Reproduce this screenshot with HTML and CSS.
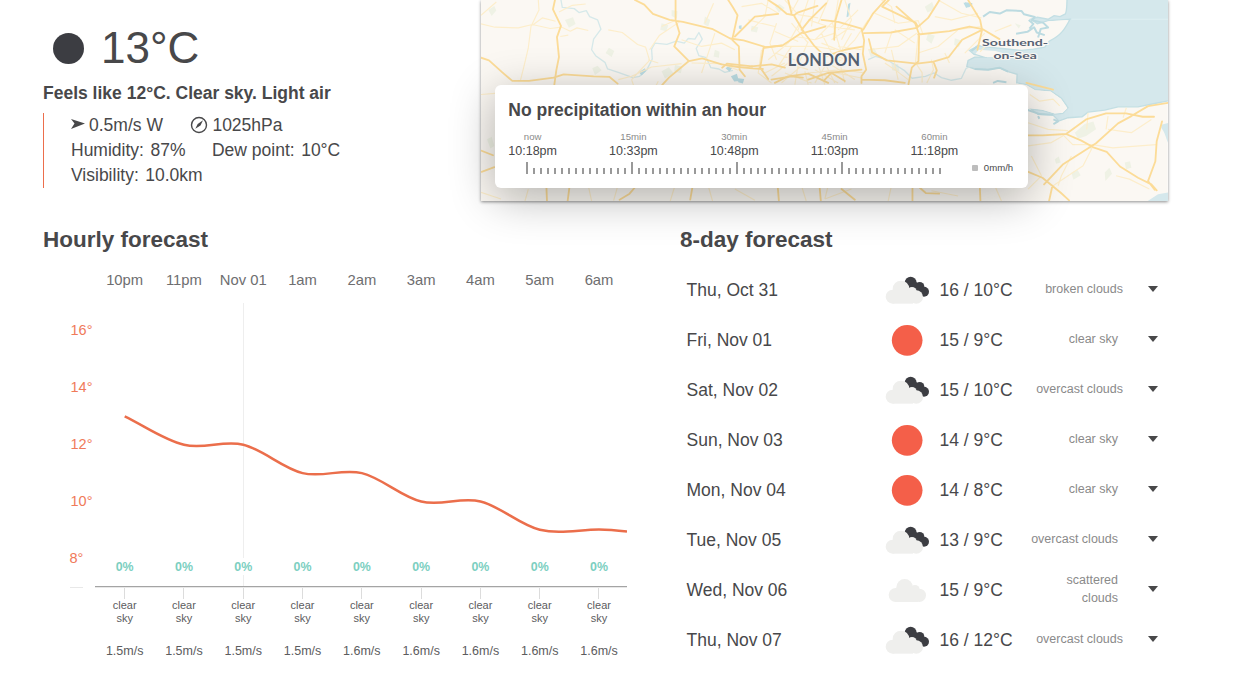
FILE: index.html
```
<!DOCTYPE html>
<html lang="en">
<head>
<meta charset="utf-8">
<title>Weather - London</title>
<link rel="stylesheet" href="styles.css">
</head>
<body>
<svg class="defs" width="0" height="0" aria-hidden="true">
  <symbol id="cloud" viewBox="0 0 135 90">
    <g fill="#efefed" transform="translate(9 -5)"><circle cx="23" cy="65" r="21"/><circle cx="50" cy="42" r="25"/><circle cx="81" cy="49" r="14"/><circle cx="94" cy="66" r="20"/><path d="M23 44H90V86H23z"/></g>
  </symbol>
  <symbol id="cloud-dark" viewBox="0 0 135 90">
    <g fill="#3c3d42"><circle cx="77" cy="23" r="18"/><circle cx="104" cy="35" r="14"/><circle cx="117" cy="50" r="15"/><path d="M62 34L92 20L124 44L112 64L84 50z"/></g>
    <g fill="#efefed"><circle cx="23" cy="65" r="21"/><circle cx="48" cy="42" r="25"/><circle cx="81" cy="50" r="14"/><circle cx="94" cy="66" r="20"/><path d="M23 46H84V86H23z"/></g>
  </symbol>
  <symbol id="sun" viewBox="0 0 135 90" overflow="visible"><circle cx="66.500" cy="46" r="46" fill="#f45f49"/></symbol>
</svg>
<main class="page">
  <section class="top">
    <div class="current">
      <div class="temp-line"><span class="moon"></span><span class="temp">13°C</span></div>
      <div class="feels">Feels like 12°C. Clear sky. Light air</div>
      <ul class="facts">
        <li><svg class="wind" viewBox="0 0 14 11"><path d="M0 0L14 4.500L0 10L3.500 4.600z" fill="#48484a"/></svg>0.5m/s W</li>
        <li><svg class="gauge" viewBox="0 0 18 18"><circle cx="9" cy="9" r="7.500" fill="none" stroke="#48484a" stroke-width="1.400"/><path d="M13 4.200L10.500 9.500L5.300 12.800L7.700 7.900z" fill="#48484a"/></svg>1025hPa</li>
        <li class="reading">Humidity:<span>87%</span></li>
        <li class="reading">Dew point:<span>10°C</span></li>
        <li class="reading visibility">Visibility:<span>10.0km</span></li>
      </ul>
    </div>
    <div class="map">
      <svg class="map-art" viewBox="18 0 2061 606" preserveAspectRatio="none">
        <rect x="18" width="2061" height="606" fill="#fbf8f3"/>
        <g fill="#eff2e5">
          <path d="M40 30l18-12 6 14-14 16zM270 60l24-8 8 20-20 12zM392 160l10-16 16 10-8 18zM560 70l20 6-6 18-18-4zM590 30l18 4-2 22-16-8zM352 206l16-8 12 14-20 14zM560 215l22-12 14 18-26 16zM600 195l22 6-4 20-20-6zM36 420l14-8 8 28-12 8zM690 50l16 10-6 20-14-8zM830 78l20 4-4 16-18-4zM720 150l14 6-2 18-16-4zM900 20l14-8 16 12-18 14z"/>
          <path d="M1350 20l22-14 8 22-22 10zM1360 100l20 8-10 24-16-12zM1250 190l20 4 4 22-22-4zM1440 115l22 8-10 20-14-8zM1180 150l18-6 10 20-20 8zM1800 400l30-26 26-8 8 24-30 20-24 8zM1840 440l18-6-8 20zM1890 520l14-14 8 18-20 22zM1950 490l16-4 4 20-16 4zM1790 520l18-8 10 16-22 14zM1740 480l12-8 6 18-14 4zM1620 70l18 6-6 10z"/>
        </g>
        <path fill="#d5e8ec" stroke="#c3dfe4" stroke-width="4" d="M1777-5C1776 14 1777 32 1772 42L1756 50L1738 47L1720 58L1688 52L1668 58L1688 72L1720 62L1786 58C1770 88 1760 106 1724 124L1710 142L1676 148L1640 152L1590 147L1540 142L1512 138L1484 152L1498 164L1536 172L1500 172L1480 182L1476 200L1500 208L1540 210L1574 204L1600 216L1627 224L1626 250L1655 255L1680 270L1728 274L1760 296L1780 325L1764 342L1740 344L1704 333L1670 330L1690 345L1735 347L1752 365L1780 355L1822 352L1840 338L1890 332L1930 322L1990 322L2040 312L2090 302V-5z"/>
        <path fill="#d5e8ec" d="M2060 376l22-6v64c-8-14-10-34-22-48zM2084 580l-34 6-34 22h68z"/>
        <path fill="#fbf8f3" d="M1700 70l24-6 56-4-30 38-36 20-30-6 20-10-10-16zM1512 150l50 4 30 8-20 10-40 0-30-10z"/>
        <path fill="#fbf8f3" d="M1626 252l30 5 26 15 46 4 30 22 20 28-14 14-24 2-38-11-76-13z"/>
        <g fill="none" stroke="#bcdbe1" stroke-width="6" stroke-linejoin="round">
          <path d="M1525 50l20-14 30 5 20-10 45 2 8 10 32 8-8 10 34 8 14 14-22 4-8 26M1624 102l34-6 20-14 8 16 24 8M1662 60l14 12-12 14M1555 250l14-6 26 4M1690 350l4 8M1736 360l14 6-14 8M1470 10l20 2-10 8M1512 136l-22 18M1500 208l40 2 34-6 26 12M1655 330l40 14 40 2"/>
        </g>
        <g fill="none" stroke="#d6e9ea" stroke-width="4" stroke-linejoin="round">
          <path d="M258 0l4 22 36 4 14 12 22-6 10 18 24 10 10 28-22 30-6 32 12 18 28 20 8 20 32 10 44 16 20-4 22-20 16-32-2-30 10-18 36 4 28-10 24 6 12-14 20 2 12-20 10 20-18 28 8 22 22 6 14 30 24 4 18 10 24-6M1180 180l22-10 34 10 26 16 26 16 24 24 40-6 26-10 22 14 30 8 30-6 14-30 22-10"/>
        </g>
        <g fill="#bcdde4"><path d="M492 218l18-12 4 8-14 14zM752 206l10-8 10 6-8 12zM768 230l18-8 6 22-14 2zM790 236l18 2-4 14-14-4zM792 78l8-2v12l-8-2zM1120 12l7-4-6 42-6 2zM1466 8l20 2 2 8-14 6z"/></g>
        <g fill="none" stroke="#fdeecb" stroke-width="3.500" stroke-linejoin="round">
          <path d="M18 46L64 6M18 72l42 10 70 2 42-10 54 12 34-4M190 0l2 30-24 50-8 64-14 60-10 40M172 76l30-22 40 10M252 36l40-20 40-4M256 80l30 14 20-10 34 8M256 110l24-4M400 90l42 8 46 36 24 8 12 40-30 32-24 26M524 150l30-44 60-40M560 80l40-18M520 180l30 10M430 240l40-10 60-28 90-10M18 285l50-4 40 10M470 240l10 30M690 70l26-60M620 120l60 20 60-10 40 20M650 190l90 2 50 20M720 100l-20 60-20 60M860 150l-10 70 40 30M870 220l60-30M550 245l-20 40M430 555l-14 50M700 560l14 50M18 580l60 20M340 560l10 46M600 560l-14 46M780 570l60 34M980 560l14 46M160 570l-10 36"/>
          <path d="M800 20l60-10 50 30M820 60l80 20M880 0l-10 50-40 40M905 70l-20 60 20 50M900 95l70 30M880 180l60-50 40-70M910 200l40-60M930 0l40 44 60 10M970 0l-24 44M1000 0l-30 90M1020 0l-10 80M1060 0l-30 70M1090 0l-10 60-60 60M950 70l50 60M960 110l60 10 60-20M930 140l90 0 60 10M900 160l60 20M890 230l50-40 60 20M920 250l70-60M960 255l10-60 30-70M1000 255l-10-40M1020 250l30-50 50-20M1050 255l-20-60M1080 250l-30-60M1110 250l-20-80 40-70M1140 240l-80-50M1170 220l-70-10-100 10M1000 60l60 20 80 10M1070 120l60-40M1040 100l30 60 60 30M1150 30l-60 60M1110 0l20 60-30 60M1070 60l30 100M1180 60l-40 60-60 60M1160 150l-70-10M930 220l80 30M1020 210l70 40M1060 215l100 20M1030 180l60-20M1040 130l100 40"/>
          <path d="M1200 40l70 30 60-8 14 40M1220 0l30 20 10 50M1260 90l60 40M1180 150l90-10 56-40M1250 100l-20 60M1330 105l-8 84 20 30 0 30M1330 160l60-20 60-50M1380 50l50 10 80-20M1390 0l70 40 60 14M1520 80l-80 10M1530 100l-60 60M1560 95l50-20M1550 120l-34 36M1230 190l30 20 40 30M1270 240l-20-90M1370 180l6 30-20 40M1410 160l14 30M1665 285l30 20 40-6 20 20M1660 370l60 20 60 4M1660 440l70-10 34-20M1764 406l30 30 60 0 60 10 130-10M1840 340l-4 50M1900 350l-6 40M1790 470l-30 60-10 30M1855 440l-30 60-90 60M1670 470l30 60-40 40M1924 530l40 10 60 30M1900 390l70 10 60-40M1945 355l10-30M1060 560l-10 40M1130 570l-80 30M1250 560l-10 46M1370 575l80 16M1560 560l20 46"/>
        </g>
        <g fill="none" stroke="#fcdc98" stroke-width="5.500" stroke-linejoin="round" stroke-linecap="round">
          <path d="M240 0l-6 28 24 50-12 34 6 60-8 40-6 44M18 174l24 8 40 36 30 26 50 0 74-10 30-10 90 6 48 2 24 20M480 0l28 14 26 28 50 18 40 6 50 12 40 10 52 28 40 6 66 20 50-4M602 0v60l12 40-16 40 44 44-60 50-20 22M642 184l40-8 58 18 50 8 44 4 30 2M760 0l14 22 14 24-16 74 20 20 2 70 16 20M866 144l-10 60 24 34M20 518l38-14M18 454l36 14M214 555l2 50M284 560l-6 46M484 560l-20 24-30 18M654 556l-8 46M908 556l4 48"/>
          <path d="M880 0l30 20 26 22 22 4 10-8 60-20M780 110l60-60 70-8M830 200l60-6 40 10M890 240l60-10 34 4M958 48l30 50 30 40M985 96l-60 40-56 8M940 0l10 40M980 90l24-30 50-50M985 100l66-20M1040 60l50 6 70 20 8 36-4 40 10 48-14 20 0 20M1100 0l-18 60-4 60M1165 90l30-50 40-44M1168 100l80-2 78-14 34-30 34-54M1265 20l56 50 12 34-2 80-20 20-10 50M1242 0l-20 20 100 48 6 10M1330 104l94-10 60-14 40 8 50 30M1480 0l36 60 6 30-14 60M1522 90l-60 30-40 52-46 14-50 6-90-10-44-24-10-40M1376 186l10 26-8 22M1160 240l70 2 60 8M1000 240l60-20 100-10M1020 140l30 30 60-20 56-10M1655 250l80 20M1654 408l50 0 70-4 60-44 60-18 60 0 50 10 34 0M1774 404l46 20 36 20 40 14 40 44 54 34 40 20 16 18M2080 310l-60 10-50 30-40 22-66 60-100 64-56 60M1655 516l48 20 56 46 24 22M2062 366l-16 60-4 60-22 60 20 26M1733 560l-10 46M1034 560l4 46M1313 560v46M1335 566l18 16 40 2M1515 560l2 46M1100 570l40 32"/>
          <path d="M742 204l14-12 76 8M900 250l40-20 60-8 60 28M1050 240l20-20 40 24"/>
        </g>
        <path d="M1790 58H2090" stroke="#deeff2" stroke-width="3"/>
        <g class="map-label" stroke-linejoin="round">
          <text x="939" y="198" font-size="49" textLength="217">LONDON</text>
          <text class="town" x="1522" y="140" font-size="31" textLength="198" lengthAdjust="spacingAndGlyphs">Southend-</text>
          <text class="town" x="1556" y="179" font-size="31" textLength="130" lengthAdjust="spacingAndGlyphs">on-Sea</text>
        </g>
      </svg>
      <div class="rain">
        <h3>No precipitation within an hour</h3>
        <div class="rain-times">
          <div><small>now</small><span>10:18pm</span></div>
          <div><small>15min</small><span>10:33pm</span></div>
          <div><small>30min</small><span>10:48pm</span></div>
          <div><small>45min</small><span>11:03pm</span></div>
          <div><small>60min</small><span>11:18pm</span></div>
        </div>
        <div class="rain-scale"><div class="ticks"></div><div class="legend"><i></i>0mm/h</div></div>
      </div>
    </div>
  </section>
  <section class="bottom">
    <div class="hourly">
      <h2>Hourly forecast</h2>
      <div class="hours"><span>10pm</span><span>11pm</span><span>Nov 01</span><span>1am</span><span>2am</span><span>3am</span><span>4am</span><span>5am</span><span>6am</span></div>
      <div class="chart">
        <svg viewBox="43 295 584 305" width="584" height="305">
          <path d="M243.500 303V558M243.500 575V586" stroke="#eeeeee" fill="none"/>
          <path d="M70 587.500H83" stroke="#e8e8e8"/>
          <path d="M124.500 588V599M183.500 588V599M243.500 588V599M302.500 588V599M361.500 588V599M421.500 588V599M480.500 588V599M539.500 588V599M598.500 588V599" stroke="#dcdcdc"/>
          <path d="M95 586.700H627" stroke="#a4a4a4" stroke-width="1.300"/>
          <g class="degrees"><text x="70.500" y="335">16°</text><text x="70.500" y="392">14°</text><text x="70.500" y="449">12°</text><text x="70.500" y="506">10°</text><text x="69.500" y="563">8°</text></g>
          <path d="M124.700 416.300C144.500 425.800 164.200 440 184 444.700C203.800 449.500 223.600 440 243.300 444.700C263 449.500 282.800 468.400 302.600 473.100C322.400 477.900 342.100 468.400 361.900 473.100C381.700 477.900 401.500 496.800 421.200 501.500C441 506.300 460.700 496.800 480.500 501.500C500.300 506.300 520 525 539.800 529.800C559.600 534.500 579.300 529.500 599 529.500C609 529.500 618 530.500 627 531.600" fill="none" stroke="#eb6e4b" stroke-width="2.500"/>
        </svg>
      </div>
      <div class="chances"><span>0%</span><span>0%</span><span>0%</span><span>0%</span><span>0%</span><span>0%</span><span>0%</span><span>0%</span><span>0%</span></div>
      <div class="skies"><span>clear<br>sky</span><span>clear<br>sky</span><span>clear<br>sky</span><span>clear<br>sky</span><span>clear<br>sky</span><span>clear<br>sky</span><span>clear<br>sky</span><span>clear<br>sky</span><span>clear<br>sky</span></div>
      <div class="winds"><span>1.5m/s</span><span>1.5m/s</span><span>1.5m/s</span><span>1.5m/s</span><span>1.6m/s</span><span>1.6m/s</span><span>1.6m/s</span><span>1.6m/s</span><span>1.6m/s</span></div>
    </div>
    <div class="daily">
      <h2>8-day forecast</h2>
      <ul class="days">
        <li><span class="date">Thu, Oct 31</span><svg class="icon"><use href="#cloud-dark"/></svg><span class="range">16 / 10°C</span><span class="desc wide">broken clouds</span><i class="caret"></i></li>
        <li><span class="date">Fri, Nov 01</span><svg class="icon"><use href="#sun"/></svg><span class="range">15 / 9°C</span><span class="desc">clear sky</span><i class="caret"></i></li>
        <li><span class="date">Sat, Nov 02</span><svg class="icon"><use href="#cloud-dark"/></svg><span class="range">15 / 10°C</span><span class="desc wide">overcast clouds</span><i class="caret"></i></li>
        <li><span class="date">Sun, Nov 03</span><svg class="icon"><use href="#sun"/></svg><span class="range">14 / 9°C</span><span class="desc">clear sky</span><i class="caret"></i></li>
        <li><span class="date">Mon, Nov 04</span><svg class="icon"><use href="#sun"/></svg><span class="range">14 / 8°C</span><span class="desc">clear sky</span><i class="caret"></i></li>
        <li><span class="date">Tue, Nov 05</span><svg class="icon"><use href="#cloud-dark"/></svg><span class="range">13 / 9°C</span><span class="desc">overcast clouds</span><i class="caret"></i></li>
        <li><span class="date">Wed, Nov 06</span><svg class="icon"><use href="#cloud"/></svg><span class="range">15 / 9°C</span><span class="desc">scattered<br>clouds</span><i class="caret"></i></li>
        <li><span class="date">Thu, Nov 07</span><svg class="icon"><use href="#cloud-dark"/></svg><span class="range">16 / 12°C</span><span class="desc wide">overcast clouds</span><i class="caret"></i></li>
      </ul>
    </div>
  </section>
</main>
</body>
</html>
```
FILE: styles.css
```
* { box-sizing: border-box; }
body {
  margin: 0;
  background: #fff;
  color: #48484a;
  font: 17.5px/25px "Liberation Sans", Arial, sans-serif;
  overflow: hidden;
}
ul { list-style: none; margin: 0; padding: 0; }
h2, h3 { margin: 0; }
.defs { display: block; }
.page { height: 697px; padding: 0 74px 0 43px; overflow: hidden; }

.top { display: flex; height: 201px; }
.current { width: 438.5px; padding-top: 18px; }
.temp-line { display: flex; align-items: center; height: 60px; padding-left: 10px; }
.moon { width: 31px; height: 31px; border-radius: 50%; background: #3c3d42; }
.temp { margin-left: 17px; font-size: 44px; line-height: 60px; }
.feels { margin-top: 3px; height: 25px; font-weight: bold; }
.facts {
  display: flex;
  flex-wrap: wrap;
  align-content: flex-start;
  column-gap: 26.5px;
  width: 330px;
  height: 75px;
  margin-top: 7px;
  padding-left: 27px;
  border-left: 1px solid #ec6e4c;
}
.facts li { display: flex; gap: 5px; white-space: pre; }
.facts .reading { gap: 6.5px; }
.facts .visibility { width: 100%; }
.wind { width: 14px; height: 11px; margin-top: 6px; margin-right: -1px; }
.gauge { width: 18px; height: 18px; margin-left: 1px; margin-top: 3px; margin-right: -1px; }

.map {
  display: flex;
  position: relative;
  width: 687px;
  height: 201px;
  box-shadow: 0 1px 3px rgba(0, 0, 0, .45);
}
.map-art { width: 100%; height: 100%; }
.map-label {
  font-family: Lato, "Open Sans", sans-serif;
  font-weight: 700;
  fill: #566273;
  stroke: #fbf8f3;
  stroke-width: 8px;
  paint-order: stroke;
}
.map-label .town { stroke-width: 6px; }
.rain {
  position: absolute;
  left: 13.5px;
  top: 85px;
  width: 533px;
  height: 103px;
  padding: 13px 14px 0 13.5px;
  border-radius: 6px;
  background: #fff;
  box-shadow: 0 10px 45px rgba(8, 8, 5, .3);
}
.rain h3 { font-size: 17.5px; line-height: 25px; }
.rain-times { display: flex; justify-content: space-between; width: 450px; margin-top: 8px; }
.rain-times div { display: flex; flex-direction: column; align-items: center; font-size: 12.5px; line-height: 17px; }
.rain-times small { font-size: 9.6px; line-height: 12px; color: #8a8a8a; }
.rain-scale { display: flex; align-items: flex-start; margin: 2px 0 0 17.5px; }
.ticks {
  width: 417px;
  height: 12px;
  background:
    repeating-linear-gradient(90deg, #999 0 2px, transparent 2px 105px),
    repeating-linear-gradient(90deg, #999 0 2px, transparent 2px 7px) 0 6px no-repeat;
}
.legend { display: flex; align-items: center; gap: 6px; margin-left: 29px; font-size: 9.6px; line-height: 11px; }
.legend i { width: 6px; height: 6px; border-radius: 1px; background: #bdbdbd; }

.bottom { display: flex; padding-top: 24px; }
h2 { font-size: 22.5px; line-height: 30px; }
.hourly { width: 584px; height: 455px; overflow: hidden; }
.hours, .chances, .skies, .winds {
  display: grid;
  grid-template-columns: repeat(9, 59.3px);
  padding-left: 52px;
  text-align: center;
}
.hours { height: 20px; margin-top: 15px; font-size: 14.8px; line-height: 20px; color: #6e6e70; }
.chart { display: flex; height: 305px; margin-top: 5px; }
.degrees { font-size: 14.5px; fill: #f07a5a; }
.chances { margin-top: -42px; height: 18px; line-height: 18px; font-size: 12.4px; font-weight: bold; color: #7ccfc1; }
.skies { margin-top: 23px; height: 26px; line-height: 13px; font-size: 11px; color: #5c5c5e; }
.winds { margin-top: 16px; height: 20px; line-height: 20px; font-size: 12.5px; color: #5c5c5e; }

.daily { width: 488px; margin-left: 53px; }
.days { margin-top: 10px; padding-left: 6.5px; }
.days li { display: flex; align-items: center; height: 50px; }
.date { width: 198.5px; }
.icon { width: 45px; height: 30px; overflow: visible; }
.range { width: 72px; margin-left: 9.5px; white-space: nowrap; }
.desc {
  width: 112.5px;
  margin-bottom: 2px;
  padding-right: 6px;
  font-size: 12.5px;
  line-height: 18px;
  color: #8a8a8a;
  text-align: right;
  white-space: nowrap;
}
.desc.wide { padding-right: 1px; }
.caret {
  margin: 0 0 3px 24px;
  border: 5px solid transparent;
  border-top: 6px solid #48484a;
  border-bottom: 0;
}
```
